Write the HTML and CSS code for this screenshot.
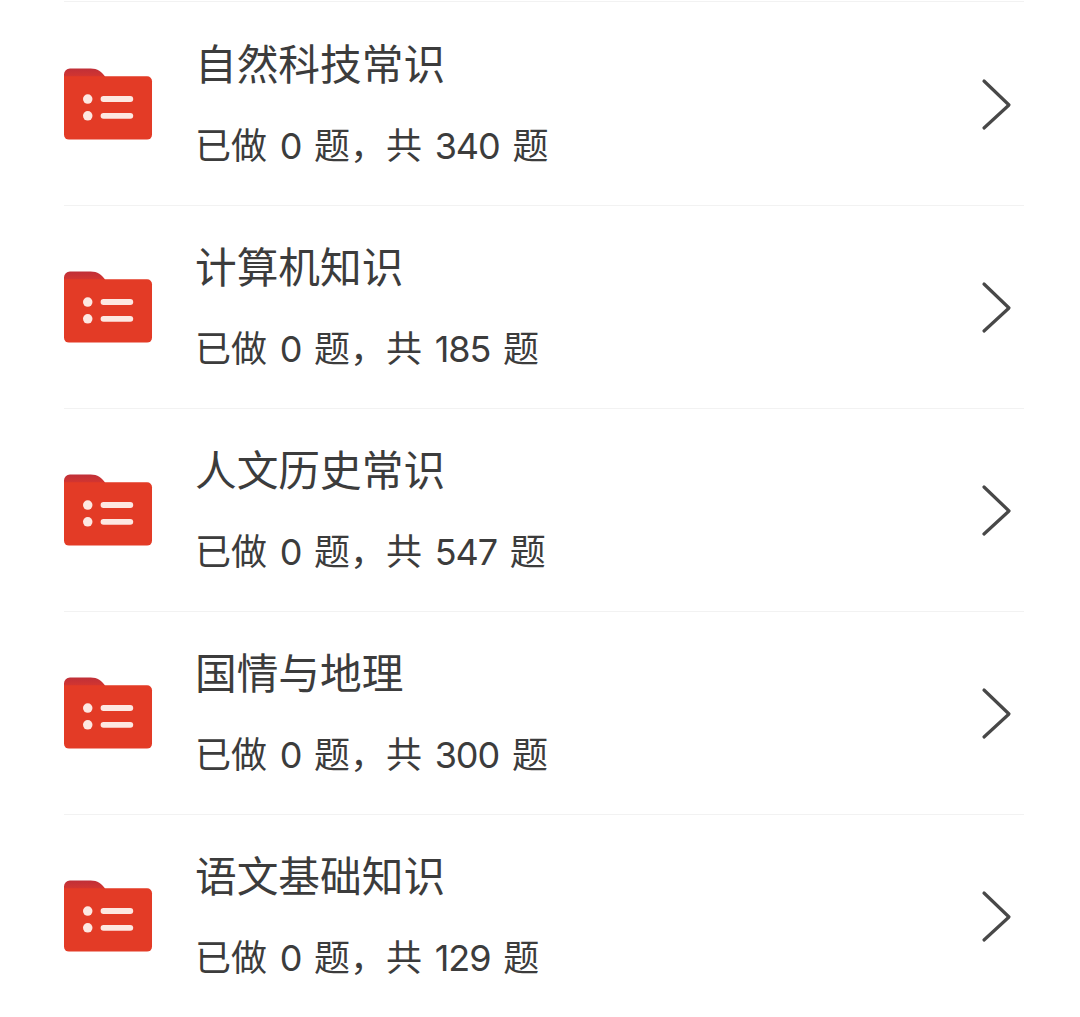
FILE: index.html
```html
<!DOCTYPE html>
<html lang="zh-CN">
<head>
    <meta charset="UTF-8">
    <meta name="viewport" content="width=device-width, initial-scale=1.0">
    <title>题库</title>
    <link rel="stylesheet" href="styles.css">
</head>
<body>
    <svg class="defs" width="0" height="0">
        <defs>
            <linearGradient id="tab" x1="0" y1="0" x2="0" y2="1">
                <stop offset="0" stop-color="#bf2f38"/>
                <stop offset="1" stop-color="#d5362f"/>
            </linearGradient>
        </defs>
        <symbol id="folder" viewBox="0 0 90 72">
            <path d="M0 6a6 6 0 0 1 6-6h21c7 0 11 3 15 9H0z" fill="url(#tab)"/>
            <path d="M0 8h84a5 5 0 0 1 5 5v54a5 5 0 0 1-5 5H5a5 5 0 0 1-5-5z" fill="#e33b26"/>
            <circle cx="24" cy="31" r="4.8" fill="#fde8e2"/>
            <circle cx="24" cy="48" r="4.8" fill="#fde8e2"/>
            <rect x="37" y="28" width="33" height="6" rx="3" fill="#fde8e2"/>
            <rect x="37" y="45" width="33" height="6" rx="3" fill="#fde8e2"/>
        </symbol>
        <symbol id="arrow" viewBox="0 0 32 54">
            <path d="M3 3l25 24L3 50" fill="none" stroke="#484848" stroke-width="3.2" stroke-linecap="round" stroke-linejoin="round"/>
        </symbol>
    </svg>

    <ul class="topic-list">
        <li class="topic">
            <svg class="topic-icon"><use href="#folder"/></svg>
            <div class="topic-text">
                <h3>自然科技常识</h3>
                <p>已做 <span class="num">0</span> 题，共 <span class="num">340</span> 题</p>
            </div>
            <svg class="topic-arrow"><use href="#arrow"/></svg>
        </li>
        <li class="topic">
            <svg class="topic-icon"><use href="#folder"/></svg>
            <div class="topic-text">
                <h3>计算机知识</h3>
                <p>已做 <span class="num">0</span> 题，共 <span class="num">185</span> 题</p>
            </div>
            <svg class="topic-arrow"><use href="#arrow"/></svg>
        </li>
        <li class="topic">
            <svg class="topic-icon"><use href="#folder"/></svg>
            <div class="topic-text">
                <h3>人文历史常识</h3>
                <p>已做 <span class="num">0</span> 题，共 <span class="num">547</span> 题</p>
            </div>
            <svg class="topic-arrow"><use href="#arrow"/></svg>
        </li>
        <li class="topic">
            <svg class="topic-icon"><use href="#folder"/></svg>
            <div class="topic-text">
                <h3>国情与地理</h3>
                <p>已做 <span class="num">0</span> 题，共 <span class="num">300</span> 题</p>
            </div>
            <svg class="topic-arrow"><use href="#arrow"/></svg>
        </li>
        <li class="topic">
            <svg class="topic-icon"><use href="#folder"/></svg>
            <div class="topic-text">
                <h3>语文基础知识</h3>
                <p>已做 <span class="num">0</span> 题，共 <span class="num">129</span> 题</p>
            </div>
            <svg class="topic-arrow"><use href="#arrow"/></svg>
        </li>
    </ul>
</body>
</html>
```

FILE: styles.css
```css
html, body {
    margin: 0;
    height: 100%;
    overflow: hidden;
}

body {
    background-color: #fff;
    color: #3c3c3c;
    font-family: Inter, "Noto Sans CJK SC", sans-serif;
}

.defs {
    display: block;
}

.topic-list {
    list-style: none;
    margin: 0;
    padding: 0 56px 0 64px;
}

.topic {
    display: flex;
    align-items: center;
    height: 203px;
    border-top: 1px solid #f2f2f2;
    margin-top: -1px;
}

.topic:first-child {
    margin-top: 1px;
    padding-top: 1px;
}

.topic-icon {
    width: 89px;
    height: 72px;
    flex: none;
    margin-bottom: 2px;
}

.topic-text {
    flex: 1;
    margin: 0 0 7px 42px;
}

.topic-text h3 {
    margin: 0;
    font-size: 41.7px;
    font-weight: 400;
    line-height: 60px;
}

.topic-text p {
    margin: 29px 0 0;
    font-size: 36px;
    line-height: 44px;
    word-spacing: 2.5px;
}

.num {
    letter-spacing: -1px;
}

.topic-arrow {
    width: 32px;
    height: 54px;
    flex: none;
    margin-right: 11px;
}
```
